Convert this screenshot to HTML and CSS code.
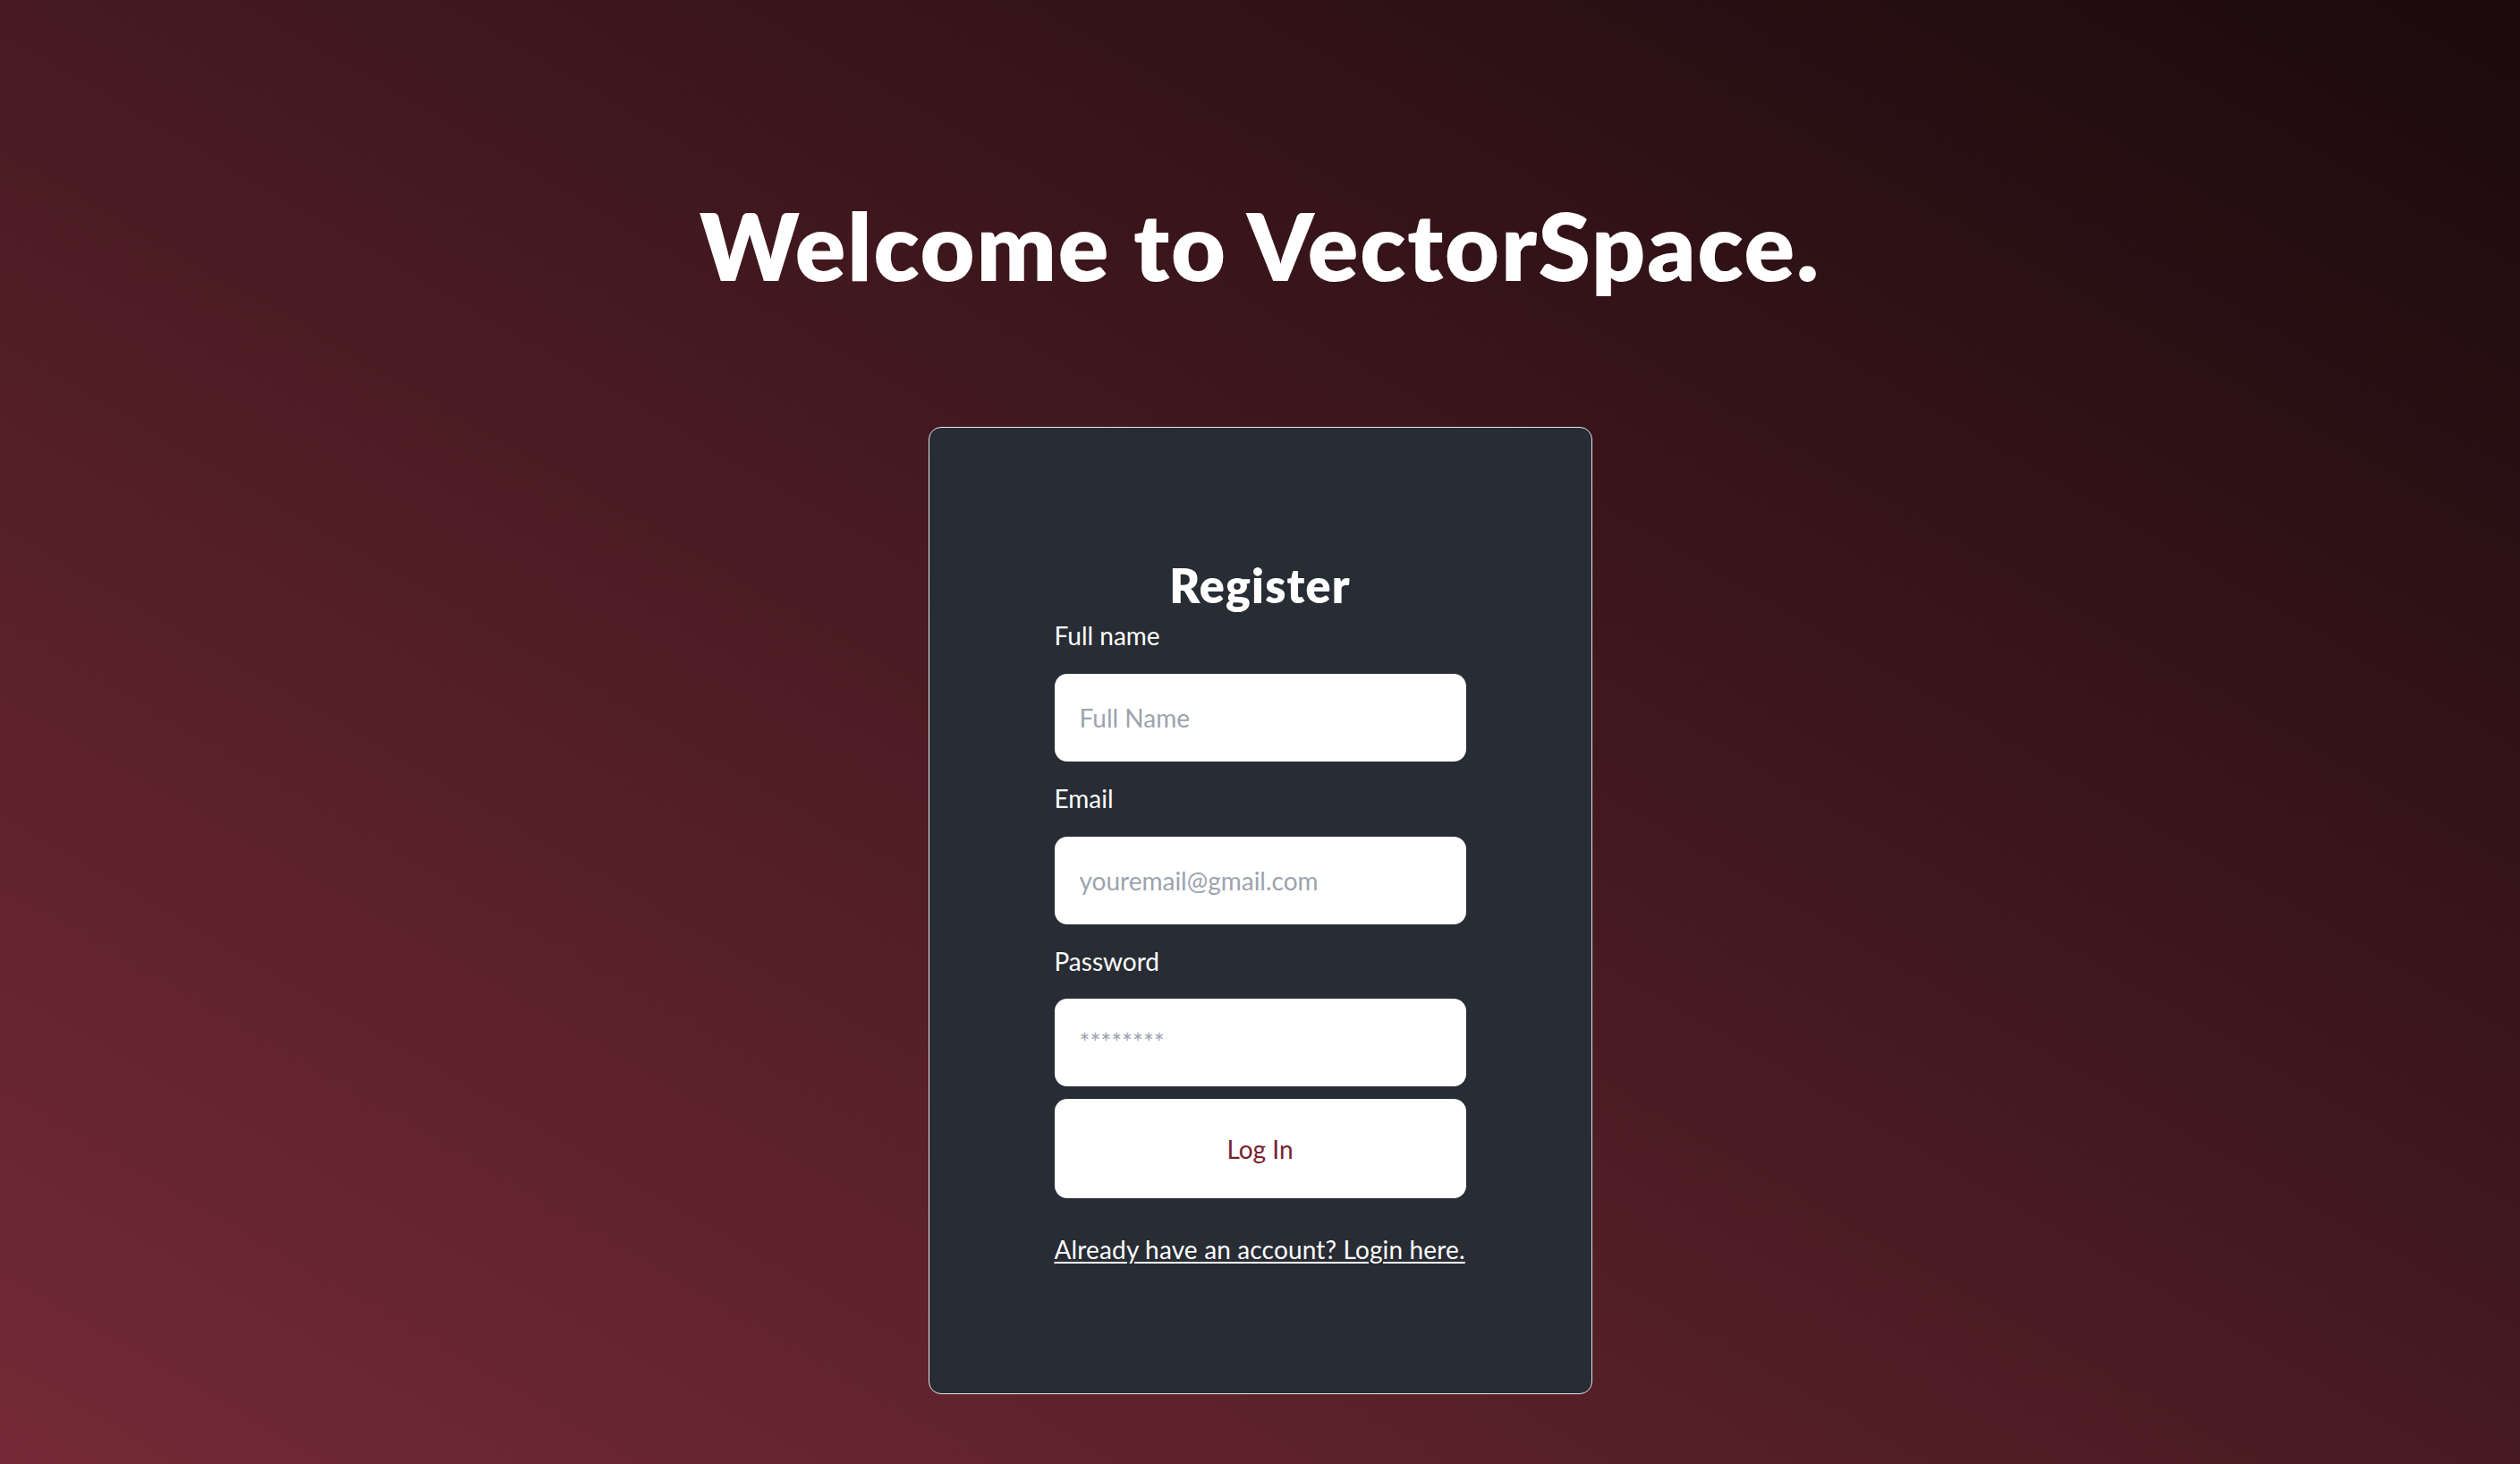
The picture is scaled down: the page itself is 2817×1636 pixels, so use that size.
FILE: index.html
```html
<!DOCTYPE html>
<html lang="en">
<head>
<meta charset="utf-8">
<title>VectorSpace - Register</title>
<link rel="stylesheet" href="styles.css">
</head>
<body>
<main class="page">
  <h1 class="title">Welcome to VectorSpace.</h1>
  <section class="card">
    <form class="form">
      <h2 class="form-title">Register</h2>
      <label class="label" for="name">Full name</label>
      <input class="field" id="name" type="text" placeholder="Full Name">
      <label class="label" for="email">Email</label>
      <input class="field" id="email" type="email" placeholder="youremail@gmail.com">
      <label class="label" for="password">Password</label>
      <input class="field field-last" id="password" type="password" placeholder="********">
      <button class="submit" type="button">Log In</button>
      <a class="switch" href="#">Already have an account? Login here.</a>
    </form>
  </section>
</main>
</body>
</html>
```
FILE: styles.css
```css
* { box-sizing: border-box; }
html, body { margin: 0; padding: 0; height: 100%; }
body {
  font-family: "Lato", "Liberation Sans", sans-serif;
  background: linear-gradient(to top right, #742a36 0%, #1a0a0c 100%);
  color: #ffffff;
  overflow: hidden;
}
.page {
  height: 100%;
  display: flex;
  flex-direction: column;
  align-items: center;
}
.title {
  margin: 210px 0 0 0;
  font-size: 105px;
  line-height: 126px;
  font-weight: 800;
  letter-spacing: 1.9px;
}
.card {
  margin-top: 141px;
  width: 742px;
  height: 1081px;
  padding-top: 3px;
  background: #282c34;
  border: 1.5px solid #e5e7eb;
  border-radius: 14px;
  display: flex;
  align-items: center;
  justify-content: center;
}
.form {
  width: 460px;
  display: flex;
  flex-direction: column;
}
.form-title {
  margin: 0 0 10px 0;
  text-align: center;
  font-size: 52px;
  line-height: 60px;
  font-weight: 800;
  letter-spacing: 1.2px;
}
.label {
  font-size: 28px;
  line-height: 33.6px;
  margin-bottom: 25px;
}
.field {
  height: 98px;
  border: none;
  border-radius: 14px;
  background: #ffffff;
  padding: 0 28px;
  font-family: inherit;
  font-size: 28px;
  color: #111827;
  margin-bottom: 25px;
  outline: none;
}
.field::placeholder { color: #9ca3af; }
.field-last { margin-bottom: 14px; }
.submit {
  height: 111px;
  border: none;
  border-radius: 14px;
  background: #ffffff;
  color: #76222f;
  font-family: inherit;
  font-size: 28px;
  cursor: pointer;
  margin-bottom: 41px;
}
.switch {
  color: #ffffff;
  font-size: 28px;
  line-height: 33.6px;
  letter-spacing: 0.15px;
  text-decoration: underline;
  text-underline-offset: 3px;
  white-space: nowrap;
}
```
